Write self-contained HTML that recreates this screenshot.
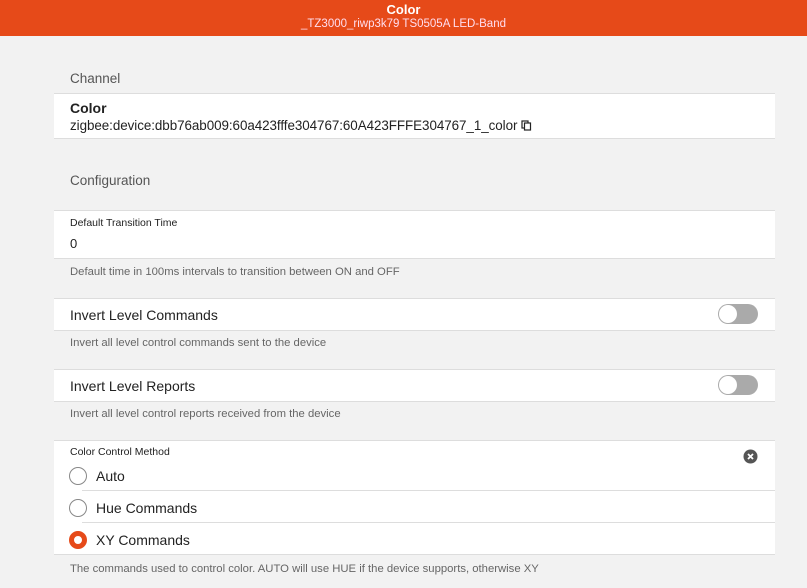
<!DOCTYPE html>
<html><head><style>
*{margin:0;padding:0;box-sizing:border-box}
body{width:807px;height:588px;background:#f2f2f2;font-family:"Liberation Sans",sans-serif;color:#222;position:relative;overflow:hidden}
.hdr{position:absolute;left:0;top:0;width:807px;height:36px;background:#e64a19;color:#fff;text-align:center}
.hdr .t{font-weight:bold;font-size:13px;position:absolute;top:2px;width:100%}
.hdr .s{font-size:11.5px;position:absolute;top:18px;width:100%;color:#fde}
.a{position:absolute}
.panel{position:absolute;left:54px;width:721px;background:#fff;border-top:1px solid #ddd;border-bottom:1px solid #ddd}
.sec{position:absolute;left:70px;font-size:13.5px;color:#555}
.help{position:absolute;left:70px;font-size:11.3px;color:#666}
.lbl{position:absolute;left:16px;font-size:14px;color:#222}
.small{position:absolute;left:16px;font-size:10.5px;color:#222}
.tog{position:absolute;left:664px;width:40px;height:20px;border-radius:10px;background:#aaa}
.tog::after{content:"";position:absolute;left:1px;top:1px;width:18px;height:18px;border-radius:50%;background:#fff}
.radio{position:absolute;left:15px;width:18px;height:18px;border-radius:50%;border:1.5px solid #888}
.sep{position:absolute;left:28px;right:0;height:1px;background:#ddd}
</style></head><body>
<div class="hdr"><div class="t">Color</div><div class="s">_TZ3000_riwp3k79 TS0505A LED-Band</div></div>
<div class="sec" style="top:71px">Channel</div>
<div class="panel" style="top:93px;height:46px">
<div class="lbl" style="top:6px;font-weight:bold">Color</div>
<div class="lbl" style="top:24px;font-size:13.4px;letter-spacing:-0.05px">zigbee:device:dbb76ab009:60a423fffe304767:60A423FFFE304767_1_color <svg width="11" height="11" viewBox="0 0 11 11" style="vertical-align:-1px"><rect x="1" y="1" width="6" height="7" fill="none" stroke="#222" stroke-width="1.2"/><rect x="3.5" y="3" width="6" height="7" fill="#fff" stroke="#222" stroke-width="1.2"/></svg></div>
</div>
<div class="sec" style="top:173px">Configuration</div>
<div class="panel" style="top:210px;height:49px">
<div class="small" style="top:6px">Default Transition Time</div>
<div class="lbl" style="top:25px;font-size:13px">0</div>
</div>
<div class="help" style="top:266px">Default time in 100ms intervals to transition between ON and OFF</div>
<div class="panel" style="top:298px;height:33px">
<div class="lbl" style="top:8px">Invert Level Commands</div>
<div class="tog" style="top:5px"></div>
</div>
<div class="help" style="top:337px">Invert all level control commands sent to the device</div>
<div class="panel" style="top:369px;height:33px">
<div class="lbl" style="top:8px">Invert Level Reports</div>
<div class="tog" style="top:5px"></div>
</div>
<div class="help" style="top:408px">Invert all level control reports received from the device</div>
<div class="panel" style="top:440px;height:115px">
<div class="small" style="top:5px">Color Control Method</div>
<svg class="a" style="left:689px;top:8px" width="15" height="15" viewBox="0 0 15 15"><circle cx="7.5" cy="7.5" r="7" fill="#555"/><path d="M5 5L10 10M10 5L5 10" stroke="#fff" stroke-width="1.8"/></svg>
<div class="radio" style="top:26px"></div><div class="lbl" style="left:42px;top:27px">Auto</div>
<div class="sep" style="top:49px"></div>
<div class="radio" style="top:58px"></div><div class="lbl" style="left:42px;top:59px">Hue Commands</div>
<div class="sep" style="top:81px"></div>
<div class="radio" style="top:90px;border:5px solid #e64a19"></div><div class="lbl" style="left:42px;top:91px">XY Commands</div>
</div>
<div class="help" style="top:563px">The commands used to control color. AUTO will use HUE if the device supports, otherwise XY</div>
</body></html>
